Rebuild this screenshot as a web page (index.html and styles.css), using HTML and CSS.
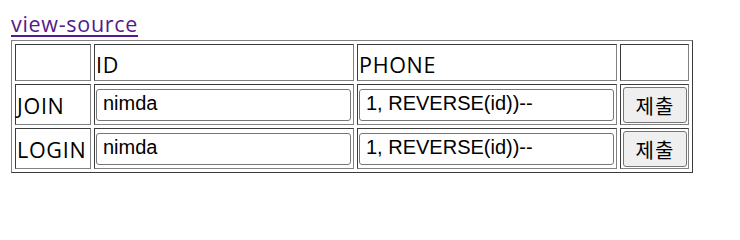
FILE: index.html
```html
<!DOCTYPE html>
<html lang="ko">
<head>
<meta charset="utf-8">
<title>view-source</title>
<link rel="stylesheet" href="styles.css">
</head>
<body>
<div class="page">
  <a class="src" href="#">view-source</a>
  <table class="grid">
    <colgroup>
      <col class="w1"><col class="w2"><col class="w3"><col class="w4">
    </colgroup>
    <tr class="head">
      <td class="lbl"></td>
      <td class="lbl">ID</td>
      <td class="lbl">PHONE</td>
      <td class="lbl"></td>
    </tr>
    <tr class="row">
      <td class="lbl">JOIN</td>
      <td class="inp"><input class="field" type="text" value="nimda"></td>
      <td class="inp"><input class="field" type="text" value="1, REVERSE(id))--"></td>
      <td class="act"><button class="btn" type="button">제출</button></td>
    </tr>
    <tr class="row">
      <td class="lbl">LOGIN</td>
      <td class="inp"><input class="field" type="text" value="nimda"></td>
      <td class="inp"><input class="field" type="text" value="1, REVERSE(id))--"></td>
      <td class="act"><button class="btn" type="button">제출</button></td>
    </tr>
  </table>
</div>
</body>
</html>
```
FILE: styles.css
```css
html, body {
  margin: 0;
  padding: 0;
  background: #ffffff;
}

.page {
  padding: 9px 11px;
  font-family: "Open Sans", "Noto Sans CJK KR", sans-serif;
  font-size: 21.5px;
  letter-spacing: 0.7px;
  color: #000;
}

.src {
  display: block;
  width: max-content;
  line-height: 29px;
  color: #551a8b;
  text-decoration: underline;
  text-decoration-thickness: 2px;
  text-underline-offset: 3px;
}

.grid {
  box-sizing: border-box;
  width: 682px;
  margin-top: 2px;
  table-layout: fixed;
  border-collapse: separate;
  border-spacing: 3px;
  border: 1px solid;
  border-color: #808080 #3c3c3c #3c3c3c #808080;
}

.w1 { width: 76px; }
.w2 { width: 260px; }
.w3 { width: 260px; }
.w4 { width: 69px; }

.grid td {
  box-sizing: border-box;
  border: 1px solid;
  border-color: #3c3c3c #808080 #808080 #3c3c3c;
  padding: 0 1px;
  vertical-align: top;
  text-align: left;
  line-height: 26px;
  white-space: nowrap;
}

.head td { height: 37px; }
.row td { height: 41px; }

.lbl { padding-top: 7px !important; }
.row .lbl { padding-top: 8px !important; }
.inp { padding-top: 4px !important; }
.act { padding-top: 2px !important; }

.field {
  box-sizing: border-box;
  display: block;
  width: 255px;
  height: 32px;
  margin: 0;
  padding: 0 5px 3px 6px;
  border: 1px solid #767676;
  border-radius: 3px;
  font-family: "Liberation Sans", Arial, sans-serif;
  font-size: 20px;
  letter-spacing: 0;
  color: #000;
  background: #fff;
}

.btn {
  box-sizing: border-box;
  display: block;
  width: 64px;
  height: 36px;
  margin: 0 0 0 1px;
  padding: 0;
  border: 1px solid #767676;
  border-radius: 3px;
  background: #efefef;
  font-family: "Noto Sans CJK KR", sans-serif;
  font-size: 20px;
  letter-spacing: 1px;
  color: #000;
}
```
